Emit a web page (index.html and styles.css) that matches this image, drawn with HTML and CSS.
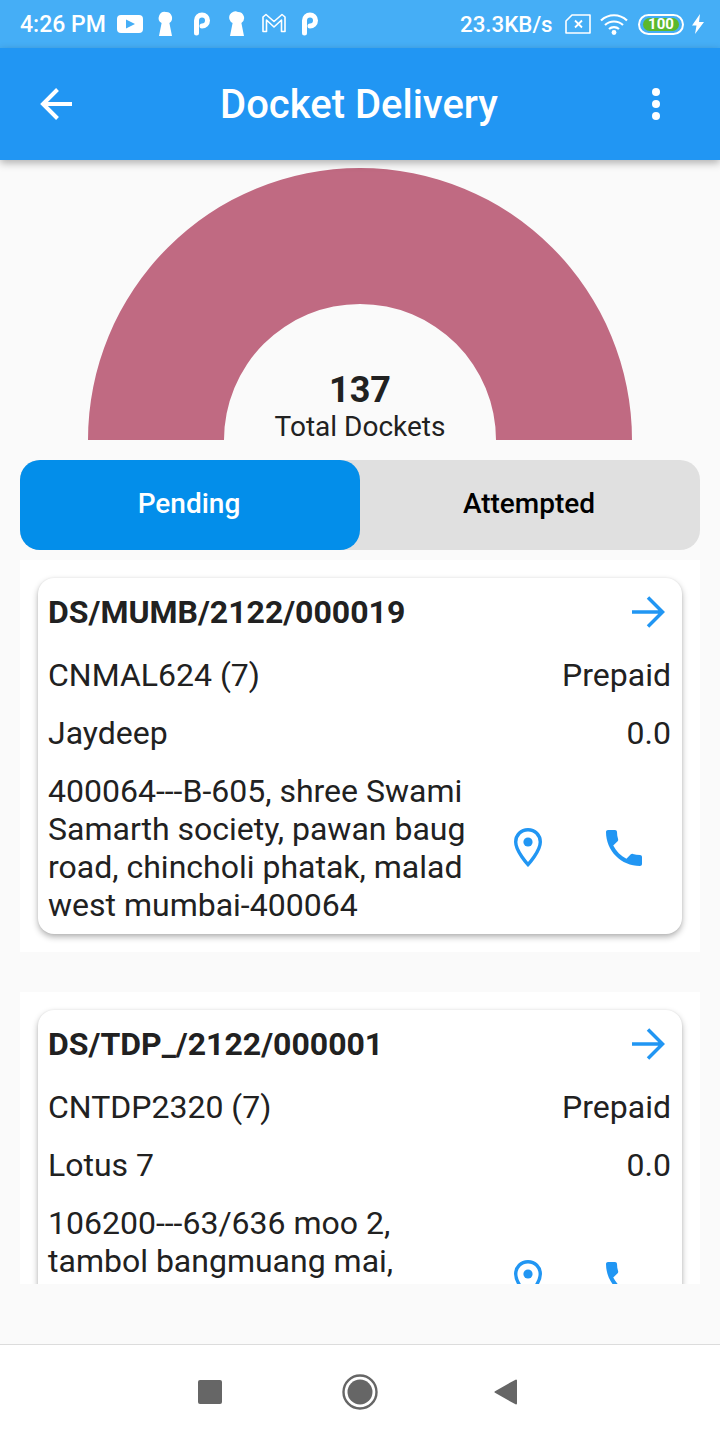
FILE: index.html
```html
<!DOCTYPE html>
<html lang="en">
<head>
    <meta charset="UTF-8">
    <meta name="viewport" content="width=device-width, initial-scale=1.0">
    <title>Docket Delivery</title>
    <link rel="stylesheet" href="styles.css">
</head>
<body>
    <div class="status-bar">
        <span class="status-time">4:26 PM</span>
        <svg class="notif-icons" width="201" height="28" viewBox="0 0 201 28">
            <rect x="0" y="5" width="26" height="18" rx="4" fill="#fff"/>
            <path d="M9 9.500l9 4.500-9 4.500z" fill="#45aef6"/>
            <path d="M49 2a6 6 0 0 1 3.400 11l2.600 13H42l2.600-13A6 6 0 0 1 49 2z" fill="#fff"/>
            <path d="M79.500 23V10.500a5.500 5.500 0 1 1 5.500 5.500" fill="none" stroke="#fff" stroke-width="5" stroke-linecap="round"/>
            <path d="M121 2a6 6 0 0 1 3.400 11l2.600 13h-14l2.600-13A6 6 0 0 1 121 2z" fill="#fff"/>
            <path d="M146 21.500V7l3-2.500 8 7 8-7 3 2.500v14.500h-3.500V10L157 17l-7.500-7v11.500z" fill="none" stroke="#fff" stroke-width="1.600" stroke-linejoin="round"/>
            <path d="M187.500 23V10.500a5.500 5.500 0 1 1 5.500 5.500" fill="none" stroke="#fff" stroke-width="5" stroke-linecap="round"/>
        </svg>
        <span class="status-speed">23.3KB/s</span>
        <svg class="sim-icon" width="26" height="20" viewBox="0 0 26 20">
            <path d="M7 1h18v18H1V7z" fill="none" stroke="#fff" stroke-width="1.600" stroke-linejoin="round"/>
            <path d="M10 6.500l7 7M17 6.500l-7 7" stroke="#fff" stroke-width="1.800"/>
        </svg>
        <svg class="wifi-icon" width="28" height="22" viewBox="0 0 28 22">
            <path d="M1 7.500c7.500-7 18.500-7 26 0M5 12c5-4.700 13-4.700 18 0M9 16c2.800-2.500 7.200-2.500 10 0" fill="none" stroke="#fff" stroke-width="2.200"/>
            <circle cx="14" cy="19.500" r="2.400" fill="#fff"/>
        </svg>
        <div class="battery"><span class="battery-level">100</span></div>
        <svg class="bolt-icon" width="12" height="20" viewBox="0 0 12 20">
            <path d="M8 0L0 11.500h4.500L3 20l9-12H7z" fill="#fff"/>
        </svg>
    </div>

    <div class="app-bar">
        <svg class="app-bar-back" width="48" height="48" viewBox="0 0 48 48">
            <path d="M11 24h29M25.500 9.500L11 24l14.500 14.500" fill="none" stroke="#fff" stroke-width="4"/>
        </svg>
        <h1 class="app-bar-title">Docket Delivery</h1>
        <svg class="app-bar-more" width="12" height="36" viewBox="0 0 12 36">
            <circle cx="6" cy="6" r="4" fill="#fff"/>
            <circle cx="6" cy="18" r="4" fill="#fff"/>
            <circle cx="6" cy="30" r="4" fill="#fff"/>
        </svg>
    </div>

    <div class="gauge">
        <svg width="544" height="272" viewBox="0 0 544 272">
            <path d="M0 272a272 272 0 0 1 544 0H408a136 136 0 0 0-272 0z" fill="#c06a82"/>
        </svg>
        <div class="gauge-label">
            <div class="gauge-count">137</div>
            <div class="gauge-text">Total Dockets</div>
        </div>
    </div>

    <div class="tabs">
        <div class="tab tab-active">Pending</div>
        <div class="tab">Attempted</div>
    </div>

    <div class="docket-list">
        <div class="docket-item">
            <div class="card">
                <div class="card-row card-head">
                    <span class="docket-no">DS/MUMB/2122/000019</span>
                    <svg class="go-icon" width="36" height="36" viewBox="0 0 36 36"><path d="M2 18h30M18 3.500L32.500 18 18 32.500" fill="none" stroke="#2196f3" stroke-width="3.500"/></svg>
                </div>
                <div class="card-row"><span>CNMAL624 (7)</span><span>Prepaid</span></div>
                <div class="card-row"><span>Jaydeep</span><span>0.0</span></div>
                <div class="card-address">
                    <div class="address-text">400064---B-605, shree Swami Samarth society, pawan baug road, chincholi phatak, malad west mumbai-400064</div>
                    <div class="address-actions">
                        <svg width="48" height="48" viewBox="0 0 24 24"><path d="M12 2.850C8.500 2.850 5.850 5.600 5.850 9c0 4.600 6.150 11.300 6.150 11.300S18.150 13.600 18.150 9c0-3.400-2.650-6.150-6.150-6.150z" fill="none" stroke="#2196f3" stroke-width="1.700"/><circle cx="12" cy="9" r="2.300" fill="#2196f3"/></svg>
                        <svg width="48" height="48" viewBox="0 0 24 24"><path fill="#2196f3" d="M6.620 10.790c1.440 2.830 3.760 5.140 6.590 6.590l2.200-2.200c.27-.27.67-.36 1.020-.24 1.120.37 2.330.57 3.570.57.55 0 1 .45 1 1V20c0 .55-.45 1-1 1-9.390 0-17-7.610-17-17 0-.55.45-1 1-1h3.500c.55 0 1 .45 1 1 0 1.250.2 2.450.57 3.570.11.35.03.74-.25 1.020l-2.200 2.200z"/></svg>
                    </div>
                </div>
            </div>
        </div>
        <div class="docket-item">
            <div class="card">
                <div class="card-row card-head">
                    <span class="docket-no">DS/TDP_/2122/000001</span>
                    <svg class="go-icon" width="36" height="36" viewBox="0 0 36 36"><path d="M2 18h30M18 3.500L32.500 18 18 32.500" fill="none" stroke="#2196f3" stroke-width="3.500"/></svg>
                </div>
                <div class="card-row"><span>CNTDP2320 (7)</span><span>Prepaid</span></div>
                <div class="card-row"><span>Lotus 7</span><span>0.0</span></div>
                <div class="card-address">
                    <div class="address-text">106200---63/636 moo 2,<br>tambol bangmuang mai,</div>
                    <div class="address-actions">
                        <svg width="48" height="48" viewBox="0 0 24 24"><path d="M12 2.850C8.500 2.850 5.850 5.600 5.850 9c0 4.600 6.150 11.300 6.150 11.300S18.150 13.600 18.150 9c0-3.400-2.650-6.150-6.150-6.150z" fill="none" stroke="#2196f3" stroke-width="1.700"/><circle cx="12" cy="9" r="2.300" fill="#2196f3"/></svg>
                        <svg width="48" height="48" viewBox="0 0 24 24"><path fill="#2196f3" d="M6.620 10.790c1.440 2.830 3.760 5.140 6.590 6.590l2.200-2.200c.27-.27.67-.36 1.020-.24 1.120.37 2.330.57 3.570.57.55 0 1 .45 1 1V20c0 .55-.45 1-1 1-9.390 0-17-7.610-17-17 0-.55.45-1 1-1h3.500c.55 0 1 .45 1 1 0 1.250.2 2.450.57 3.570.11.35.03.74-.25 1.020l-2.200 2.200z"/></svg>
                    </div>
                </div>
            </div>
        </div>
    </div>

    <div class="spacer"></div>

    <div class="nav-bar">
        <svg class="nav-square" width="24" height="24" viewBox="0 0 24 24"><rect width="24" height="24" rx="2" fill="#666"/></svg>
        <svg class="nav-home" width="36" height="36" viewBox="0 0 36 36"><circle cx="18" cy="18" r="16.500" fill="none" stroke="#666" stroke-width="2.400"/><circle cx="18" cy="18" r="12.500" fill="#666"/></svg>
        <svg class="nav-back" width="24" height="28" viewBox="0 0 24 28"><path d="M22 2.500v23L1.500 14z" fill="#666" stroke="#666" stroke-width="2" stroke-linejoin="round"/></svg>
    </div>
</body>
</html>
```

FILE: styles.css
```css
* {
    box-sizing: border-box;
}

body {
    font-family: Roboto, sans-serif;
    margin: 0;
    width: 720px;
    height: 1440px;
    display: flex;
    flex-direction: column;
    overflow: hidden;
    background-color: #fafafa;
    color: #212121;
}

.status-bar {
    height: 48px;
    flex: none;
    display: flex;
    align-items: center;
    padding-left: 20px;
    background-color: #45aef6;
    color: #fff;
}

.status-time {
    width: 97px;
    font-size: 23px;
    font-weight: 500;
    white-space: nowrap;
}

.notif-icons {
    flex: none;
}

.status-speed {
    margin-left: 142px;
    width: 105px;
    font-size: 22.3px;
    font-weight: 500;
    white-space: nowrap;
}

.wifi-icon {
    margin-left: 9px;
}

.battery {
    width: 46px;
    height: 21px;
    margin-left: 10px;
    padding: 2px 3px;
    border: 2px solid #fff;
    border-radius: 11px;
}

.battery-level {
    display: block;
    height: 13px;
    line-height: 13px;
    border-radius: 7px;
    background-color: #5cb82d;
    color: #fff;
    font-size: 15px;
    font-weight: 700;
    text-align: center;
}

.bolt-icon {
    margin-left: 8px;
}

.app-bar {
    height: 112px;
    flex: none;
    position: relative;
    z-index: 1;
    display: flex;
    align-items: center;
    padding: 0 58px 0 32px;
    background-color: #2196f3;
    color: #fff;
    box-shadow: 0 3px 8px rgba(0, 0, 0, 0.3);
}

.app-bar-title {
    flex: 1;
    margin: 0;
    padding-right: 12px;
    font-size: 40px;
    font-weight: 500;
    text-align: center;
}

.gauge {
    height: 300px;
    flex: none;
    position: relative;
    padding-top: 8px;
    text-align: center;
}

.gauge svg {
    display: block;
    margin: 0 auto;
}

.gauge-label {
    position: absolute;
    left: 0;
    right: 0;
    top: 209px;
}

.gauge-count {
    font-size: 36px;
    font-weight: 700;
    line-height: 42px;
}

.gauge-text {
    font-size: 28px;
    line-height: 32px;
}

.tabs {
    height: 90px;
    flex: none;
    display: flex;
    margin: 0 20px 10px;
    border-radius: 20px;
    background-color: #e0e0e0;
}

.tab {
    flex: 1;
    display: flex;
    align-items: center;
    justify-content: center;
    padding: 0 2px 3px 0;
    border-radius: 20px;
    color: #000;
    font-size: 28px;
    font-weight: 500;
}

.tab-active {
    background-color: #038eea;
    color: #fff;
}

.docket-list {
    height: 724px;
    flex: none;
    overflow: hidden;
    margin: 0 20px;
}

.docket-item {
    padding: 18px;
    margin-bottom: 40px;
    background-color: #fff;
}

.card {
    height: 356px;
    padding: 15px 11px 10px 10px;
    border-radius: 16px;
    background-color: #fff;
    box-shadow: 0 3px 6px rgba(0, 0, 0, 0.3), 0 0 2px rgba(0, 0, 0, 0.08);
    font-size: 32px;
    line-height: 38px;
}

.card-row {
    display: flex;
    justify-content: space-between;
    margin-bottom: 20px;
}

.card-head {
    margin-bottom: 25px;
    align-items: center;
}

.docket-no {
    font-weight: 700;
}

.go-icon {
    margin-right: 5px;
}

.card-address {
    min-height: 152px;
    display: flex;
    align-items: center;
}

.address-text {
    flex: 1;
    align-self: flex-start;
}

.address-actions {
    flex: none;
    display: flex;
    gap: 48px;
    padding-right: 23px;
}

.spacer {
    flex: 1;
}

.nav-bar {
    height: 96px;
    flex: none;
    display: flex;
    align-items: center;
    padding: 0 0 1px 198px;
    border-top: 1px solid #dcdcdc;
    background-color: #fff;
}

.nav-home {
    margin-left: 120px;
}

.nav-back {
    margin-left: 116px;
}
```
